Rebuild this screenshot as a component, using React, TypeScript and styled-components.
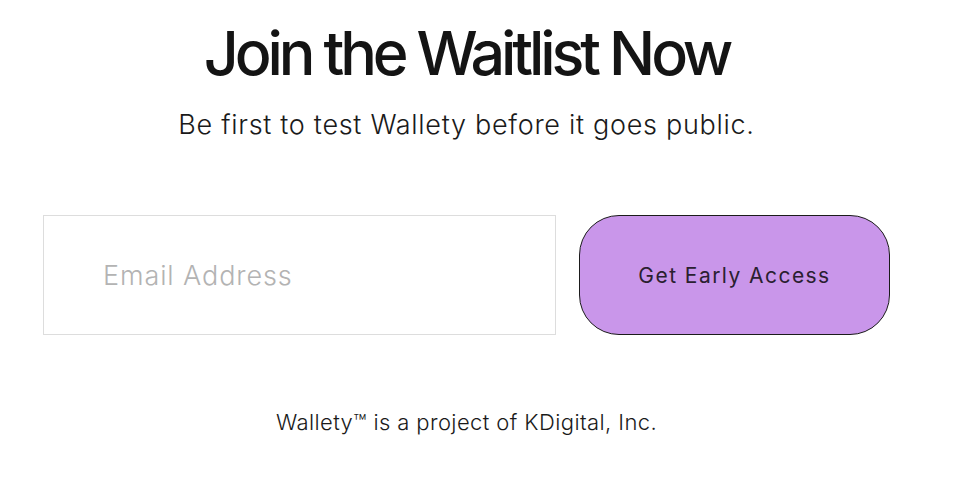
import React from "react";
import styled, { createGlobalStyle } from "styled-components";

const Global = createGlobalStyle`
  html, body { margin: 0; padding: 0; background: #ffffff; }
  body { font-family: Inter, "Noto Sans", sans-serif; color: #151515; }
  * { box-sizing: border-box; }
`;

const Page = styled.main`
  width: 960px;
  height: 502px;
  padding: 19px 0 0 43px;
  overflow: hidden;
`;

const Column = styled.div`
  width: 847px;
  display: flex;
  flex-direction: column;
  align-items: center;
`;

const Title = styled.h1`
  margin: 0;
  font-family: Inter, sans-serif;
  font-weight: 500;
  font-size: 61px;
  line-height: 68px;
  letter-spacing: -4.1px;
  color: #141414;
`;

const Subtitle = styled.p`
  margin: 20px 0 0;
  font-family: Inter, sans-serif;
  font-weight: 300;
  font-size: 27px;
  line-height: 36px;
  letter-spacing: 0.7px;
  color: #1a1a1a;
`;

const Form = styled.form`
  margin-top: 72px;
  width: 100%;
  display: flex;
  gap: 23px;
`;

const EmailInput = styled.input`
  width: 513px;
  height: 120px;
  border: 1px solid #dddddd;
  padding: 0 0 0 59px;
  font-family: Inter, sans-serif;
  font-weight: 300;
  font-size: 27px;
  letter-spacing: 0.9px;
  color: #222;
  outline: none;
  background: #fff;
  &::placeholder { color: #b3b3b3; }
`;

const SubmitButton = styled.button`
  width: 311px;
  height: 120px;
  border: 1px solid #1b1b1b;
  border-radius: 40px;
  background: #c996ea;
  font-family: Inter, sans-serif;
  font-weight: 400;
  font-size: 21px;
  letter-spacing: 1.45px;
  color: #2a2030;
  cursor: pointer;
`;

const Footer = styled.p`
  margin: 72px 0 0;
  font-family: Inter, sans-serif;
  font-weight: 300;
  font-size: 22px;
  line-height: 30px;
  letter-spacing: 0.4px;
  color: #1a1a1a;
`;

export default function App() {
  return (
    <>
      <Global />
      <Page>
        <Column>
          <Title>Join the Waitlist Now</Title>
          <Subtitle>Be first to test Wallety before it goes public.</Subtitle>
          <Form onSubmit={(e) => e.preventDefault()}>
            <EmailInput type="email" placeholder="Email Address" />
            <SubmitButton type="submit">Get Early Access</SubmitButton>
          </Form>
          <Footer>Wallety™ is a project of KDigital, Inc.</Footer>
        </Column>
      </Page>
    </>
  );
}
